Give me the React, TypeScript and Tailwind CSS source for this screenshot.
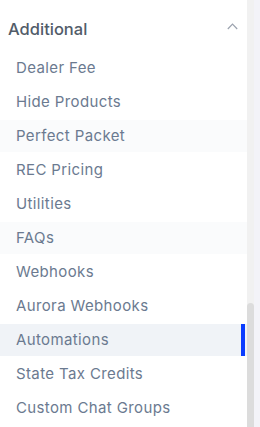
import React from 'react';

const items = [
  { label: 'Dealer Fee' },
  { label: 'Hide Products' },
  { label: 'Perfect Packet', faint: true },
  { label: 'REC Pricing' },
  { label: 'Utilities' },
  { label: 'FAQs', faint: true },
  { label: 'Webhooks' },
  { label: 'Aurora Webhooks' },
  { label: 'Automations', active: true },
  { label: 'State Tax Credits' },
  { label: 'Custom Chat Groups' },
];

export default function App() {
  return (
    <div className="flex h-[427px] w-[260px] overflow-hidden bg-[#f3f3f8] font-['Inter',sans-serif]">
      <div className="flex w-[247px] flex-col bg-white">
        {/* Section header */}
        <div className="flex h-[51px] items-center justify-between pl-2 pr-[9px] pt-[8px]">
          <span className="text-[16.5px] font-medium text-[#525c69]">Additional</span>
          <svg width="11" height="7" viewBox="0 0 11 7" fill="none" stroke="#9ca3af" strokeWidth="1.2" className="mb-[6px]">
            <path d="M0.8 6 L5.5 1.2 L10.2 6" />
          </svg>
        </div>

        <div className="flex flex-col gap-[2px] pt-[1px]">
          {items.map((item) => (
            <div
              key={item.label}
              className={`relative flex h-[32px] items-center pl-4 text-[15px] tracking-[0.025em] text-[#6b7a90]
              ${item.active ? 'bg-[#f0f3f7]' : item.faint ? 'bg-[#fafbfc]' : ''}`}
            >
              {item.label}
              {item.active && <div className="absolute right-[2px] top-0 h-full w-[4px] bg-[#0a3cff]"></div>}
            </div>
          ))}
        </div>
      </div>

      {/* Scrollbar */}
      <div className="flex w-[7px] flex-col bg-[#f1f1f1]">
        <div className="mt-[303px] flex-1 rounded-t-[4px] bg-[#dcdcdc]"></div>
      </div>
    </div>
  );
}
